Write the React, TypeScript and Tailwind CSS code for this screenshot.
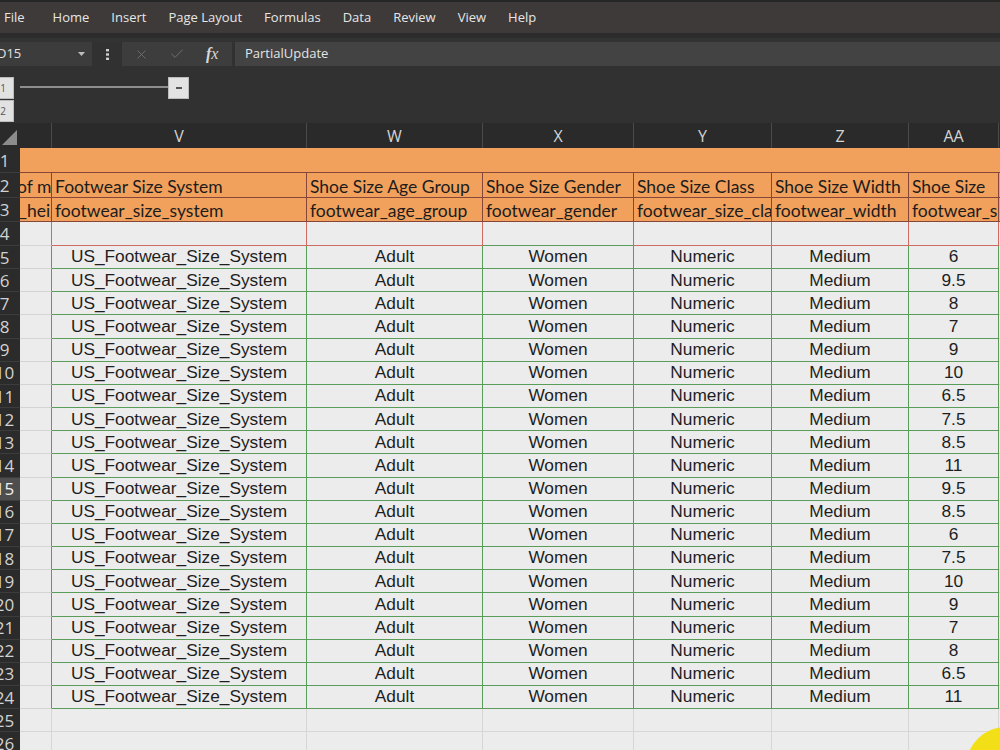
import { Check, X } from "lucide-react";

const menu = ["Home", "Insert", "Page Layout", "Formulas", "Data", "Review", "View", "Help"];

// visible columns, U is scrolled half out of view, AB only shows a sliver
const cols = [
  { letter: "", w: "w-[32px]" },
  { letter: "V", w: "w-[255px]" },
  { letter: "W", w: "w-[176px]" },
  { letter: "X", w: "w-[151px]" },
  { letter: "Y", w: "w-[138px]" },
  { letter: "Z", w: "w-[137px]" },
  { letter: "AA", w: "w-[90px]" },
  { letter: "", w: "w-[60px]" },
];

const titles = ["Footwear Size System", "Shoe Size Age Group", "Shoe Size Gender", "Shoe Size Class", "Shoe Size Width", "Shoe Size", ""];
const keys = ["footwear_size_system", "footwear_age_group", "footwear_gender", "footwear_size_class", "footwear_width", "footwear_size", ""];

const sizes = ["6", "9.5", "8", "7", "9", "10", "6.5", "7.5", "8.5", "11", "9.5", "8.5", "6", "7.5", "10", "9", "7", "8", "6.5", "11"];

const uiFont = "font-['Open_Sans','Noto_Sans',sans-serif]";
const headFont = "font-['Lato','Open_Sans',sans-serif]";
const dataFont = "font-['Liberation_Sans',Arial,sans-serif]";

function RowHead({ n, h, active }: { n: number; h: string; active?: boolean }) {
  return (
    <div
      className={`${h} w-[20px] shrink-0 overflow-hidden border-b border-[#3c3c3c] ${
        active ? "bg-[#4e4e4e] text-[#f0f0f0]" : "bg-[#2b2b2b] text-[#d2d2d2]"
      }`}
    >
      <div className={`${uiFont} -ml-[16px] flex h-full w-[41px] items-center justify-center text-[17px] leading-none`}>
        {n}
      </div>
    </div>
  );
}

export default function App() {
  return (
    <div className="relative h-[750px] w-[1000px] overflow-hidden bg-[#313131] select-none">
      {/* Ribbon tabs */}
      <div className="h-[2px] bg-[#262626]" />
      <div className={`${uiFont} flex h-[31px] items-center gap-[22px] bg-[#3d3a39] pl-[4px] text-[13px] text-[#e6e6e6]`}>
        <span className="mr-[6px]">File</span>
        {menu.map((m) => (
          <span key={m}>{m}</span>
        ))}
      </div>
      <div className="h-[5px] bg-[#2c2c2c]" />
      <div className="h-[4px] bg-[#333333]" />

      {/* Formula bar */}
      <div className={`${uiFont} flex h-[24px] items-stretch text-[13px]`}>
        <div className="flex w-[92px] items-center justify-between bg-[#3c3c3c] pr-[7px] text-[#e2e2e2]">
          <span className="-ml-[3px]">D15</span>
          <svg width="7" height="4" viewBox="0 0 7 4">
            <polygon points="0,0 7,0 3.5,4" fill="#bdbdbd" />
          </svg>
        </div>
        <div className="flex w-[30px] items-center justify-center">
          <svg width="3" height="11" viewBox="0 0 3 11">
            <rect x="0" y="0" width="3" height="2.4" fill="#cfcfcf" />
            <rect x="0" y="4.3" width="3" height="2.4" fill="#cfcfcf" />
            <rect x="0" y="8.6" width="3" height="2.4" fill="#cfcfcf" />
          </svg>
        </div>
        <div className="flex w-[110px] items-center bg-[#3d3d3d]">
          <X size={15} strokeWidth={1.4} className="ml-[12px] text-[#727272]" />
          <Check size={16} strokeWidth={1.4} className="ml-[20px] text-[#727272]" />
          <span className="ml-[21px] font-['Liberation_Serif',serif] text-[16px] italic text-[#d8d8d8]">
            <span className="font-bold">f</span>x
          </span>
        </div>
        <div className="w-[3px] bg-[#313131]" />
        <div className="flex flex-1 items-center bg-[#434343] pl-[10px] text-[#e4e4e4]">PartialUpdate</div>
      </div>

      {/* Outline grouping */}
      <div className="relative h-[57px]">
        <div className="absolute -left-[8px] top-[11px] flex flex-col gap-[1px]">
          {[1, 2].map((n) => (
            <div
              key={n}
              className={`${uiFont} flex h-[22px] w-[22px] items-center justify-center border border-[#bcbcbc] bg-[#e2e2e2] text-[10px] text-[#555]`}
            >
              {n}
            </div>
          ))}
        </div>
        <div className="absolute left-[20px] top-[20px] h-[2px] w-[148px] bg-[#8e8e8e]" />
        <div className="absolute left-[168px] top-[11px] flex h-[22px] w-[21px] items-center justify-center border border-[#bcbcbc] bg-[#e2e2e2]">
          <div className="h-[1.5px] w-[6px] bg-[#555]" />
        </div>
      </div>

      {/* Column headers */}
      <div className="flex h-[25px] bg-[#2a2a2a]">
        <div className="relative w-[20px] shrink-0">
          <svg className="absolute bottom-[3px] right-[3px]" width="15" height="15" viewBox="0 0 15 15">
            <polygon points="15,0 15,15 0,15" fill="#8c8c8c" />
          </svg>
        </div>
        {cols.map((c, i) => (
          <div
            key={i}
            className={`${c.w} ${uiFont} flex shrink-0 items-center justify-center border-r border-[#4a4a4a] text-[16px] text-[#d4d4d4]`}
          >
            {c.letter}
          </div>
        ))}
      </div>

      {/* Row 1 */}
      <div className="flex">
        <RowHead n={1} h="h-[25px]" />
        <div className="h-[25px] flex-1 border-b border-[#86473a] bg-[#f1a15c]" />
      </div>

      {/* Rows 2 and 3 */}
      {[titles, keys].map((row, r) => (
        <div key={r} className="flex">
          <RowHead n={r + 2} h={r === 0 ? "h-[25px]" : "h-[24px]"} />
          <div
            className={`${r === 0 ? "h-[25px]" : "h-[24px]"} ${headFont} flex w-[32px] shrink-0 items-end overflow-hidden whitespace-nowrap border-b border-r border-[#86473a] bg-[#f1a15c] pb-[2px] text-[17.5px] leading-none text-[#1c1c1c]`}
          >
            <span className={r === 0 ? "-ml-[3px]" : "-ml-[1px]"}>{r === 0 ? "of model" : "_height"}</span>
          </div>
          {row.map((t, i) => (
            <div
              key={i}
              className={`${cols[i + 1].w} ${r === 0 ? "h-[25px]" : "h-[24px]"} ${headFont} flex shrink-0 items-end overflow-hidden whitespace-nowrap border-b border-r border-[#86473a] bg-[#f1a15c] pb-[2px] pl-[3px] text-[17.5px] leading-none text-[#1c1c1c]`}
            >
              {t}
            </div>
          ))}
        </div>
      ))}

      {/* Row 4: empty, red borders */}
      <div className="flex">
        <RowHead n={4} h="h-[24px]" />
        <div className="h-[24px] w-[32px] shrink-0 border-b border-r border-b-[#d4d4d4] border-r-[#cf6a63] bg-[#ececec]" />
        {cols.slice(1, 7).map((c, i) => (
          <div
            key={i}
            className={`${c.w} h-[24px] shrink-0 border-b border-r border-r-[#cf6a63] bg-[#ececec] ${
              i === 2 ? "border-b-[#5a9c5a]" : "border-b-[#cf6a63]"
            }`}
          />
        ))}
        <div className="h-[24px] w-[60px] shrink-0 border-b border-[#d4d4d4] bg-[#ececec]" />
      </div>

      {/* Data rows */}
      {sizes.map((s, i) => {
        const n = i + 5;
        const vals = ["US_Footwear_Size_System", "Adult", "Women", "Numeric", "Medium", s];
        return (
          <div key={n} className="flex">
            <RowHead n={n} h="h-[23.16px]" active={n === 15} />
            <div className="h-[23.16px] w-[32px] shrink-0 border-b border-r border-b-[#d4d4d4] border-r-[#5a9c5a] bg-[#ececec]" />
            {vals.map((v, j) => (
              <div
                key={j}
                className={`${cols[j + 1].w} ${dataFont} flex h-[23.16px] shrink-0 items-center justify-center border-b border-r border-[#5a9c5a] bg-[#ececec] text-[17.3px] leading-none text-[#1e1e1e]`}
              >
                {v}
              </div>
            ))}
            <div className="h-[23.16px] w-[60px] shrink-0 border-b border-[#d4d4d4] bg-[#ececec]" />
          </div>
        );
      })}

      {/* Empty rows below */}
      {[25, 26].map((n) => (
        <div key={n} className="flex">
          <RowHead n={n} h="h-[23.16px]" />
          {cols.map((c, i) => (
            <div key={i} className={`${c.w} h-[23.16px] shrink-0 border-b border-r border-[#d6d6d6] bg-[#ececec]`} />
          ))}
        </div>
      ))}

      {/* pointer highlight */}
      <div className="absolute left-[966px] top-[727px] h-[80px] w-[80px] rounded-full bg-[#f3df17]" />
    </div>
  );
}
